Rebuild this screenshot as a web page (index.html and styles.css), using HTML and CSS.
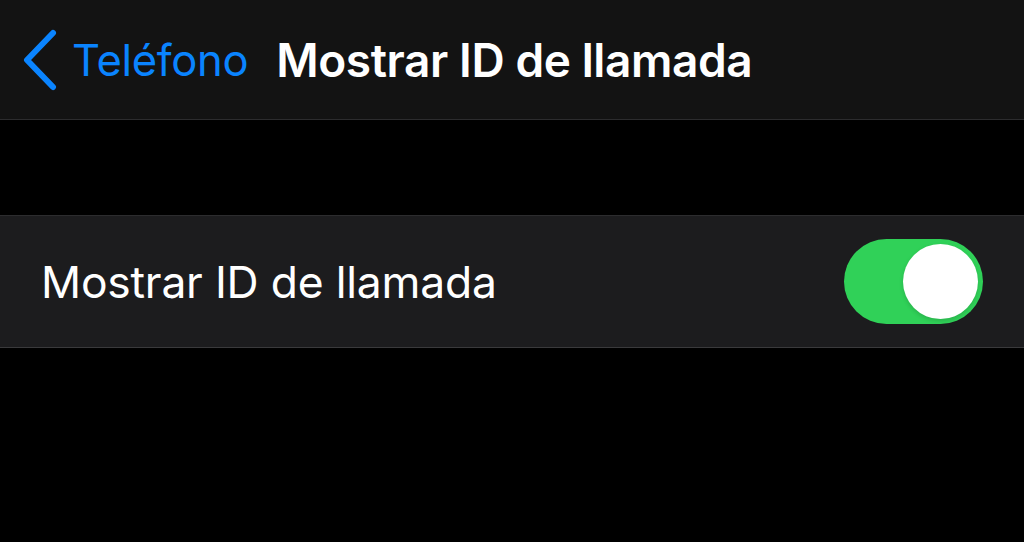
FILE: index.html
```html
<!DOCTYPE html>
<html lang="es">
<head>
<meta charset="utf-8">
<link rel="stylesheet" href="styles.css">
</head>
<body>
<header class="nav">
  <a class="back">
    <svg class="chev" width="38" height="62" viewBox="0 0 38 62"><path d="M32 4 L6 31 L32 58" fill="none" stroke="#0a84ff" stroke-width="6" stroke-linecap="round" stroke-linejoin="round"/></svg>
    <span class="back-label">Teléfono</span>
  </a>
  <h1 class="title">Mostrar ID de llamada</h1>
</header>
<div class="gap"></div>
<section class="group">
  <div class="row">
    <span class="row-label">Mostrar ID de llamada</span>
    <span class="switch"><span class="knob"></span></span>
  </div>
</section>
</body>
</html>
```
FILE: styles.css
```css
html, body {
  margin: 0;
  padding: 0;
  background: #000;
  width: 1024px;
  height: 542px;
  overflow: hidden;
  font-family: Inter, "Noto Sans", sans-serif;
}
.nav {
  height: 119px;
  background: #131313;
  border-bottom: 1px solid #2c2c2e;
  display: flex;
  align-items: center;
  padding-left: 21px;
}
.back {
  display: flex;
  align-items: center;
  color: #0a84ff;
  margin-right: 28px;
}
.chev {
  display: block;
  margin-right: 13px;
}
.back-label {
  font-size: 43.5px;
  font-weight: 400;
  letter-spacing: -0.3px;
}
.title {
  margin: 0;
  color: #fff;
  font-size: 46px;
  font-weight: 600;
  letter-spacing: -0.4px;
}
.gap {
  height: 95px;
}
.group {
  background: #1c1c1e;
  border-top: 1px solid #2c2c2e;
  border-bottom: 1px solid #3a3a3c;
}
.row {
  height: 131px;
  display: flex;
  align-items: center;
  justify-content: space-between;
  padding: 0 41px 0 41px;
}
.row-label {
  color: #fff;
  font-size: 44.4px;
  font-weight: 400;
  letter-spacing: -0.2px;
}
.switch {
  width: 139px;
  height: 85px;
  border-radius: 43px;
  background: #30d158;
  position: relative;
}
.knob {
  position: absolute;
  right: 5px;
  top: 5px;
  width: 75px;
  height: 75px;
  border-radius: 50%;
  background: #fff;
  box-shadow: 0 2px 4px rgba(0,0,0,0.15);
}
```
